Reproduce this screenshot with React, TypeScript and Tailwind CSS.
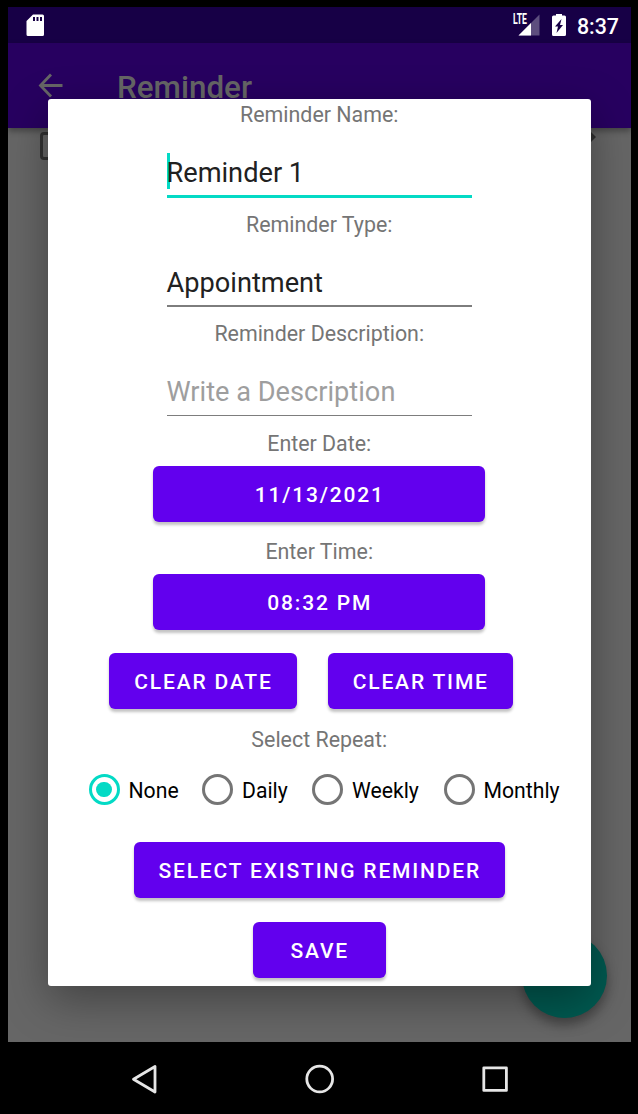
import React from "react";

function Label({ children, className = "" }: { children: React.ReactNode; className?: string }) {
  return (
    <div className={`flex h-[29px] shrink-0 items-center text-[21.4px] leading-[29px] text-[#757575] ${className}`}>
      {children}
    </div>
  );
}

function Button({ children, className = "" }: { children: React.ReactNode; className?: string }) {
  return (
    <button
      className={`flex h-[55.5px] shrink-0 items-center justify-center rounded-[6px] bg-[#6200ee] pt-[3px] pl-px text-[21px] font-medium tracking-[1.83px] whitespace-nowrap text-white shadow-[0_3px_3px_rgba(0,0,0,0.24)] ${className}`}
    >
      {children}
    </button>
  );
}

function Field({ text, state = "filled", className = "" }: { text: string; state?: "focused" | "filled" | "hint"; className?: string }) {
  return (
    <div className={`flex w-[305.5px] shrink-0 flex-col ${className}`}>
      <div className="relative flex h-[36px] items-center pt-[3px]">
        {state === "focused" && <span className="absolute top-0 left-0 h-[36px] w-[3px] bg-[#03dac5]" />}
        <span className={`relative text-[27.2px] leading-[36px] whitespace-nowrap ${state === "hint" ? "text-[#9e9e9e]" : "text-[#212121]"}`}>
          {text}
        </span>
      </div>
      <div className={state === "focused" ? "mt-[6px] h-[3px] bg-[#03dac5]" : "mt-[6px] h-[1.5px] bg-[#7d7d7d]"} />
    </div>
  );
}

function Radio({ label, checked = false, className = "" }: { label: string; checked?: boolean; className?: string }) {
  return (
    <label className={`flex shrink-0 items-center text-[21.2px] leading-[30px] text-black ${className}`}>
      <span className={`flex size-[31px] shrink-0 items-center justify-center rounded-full border-[3px] ${checked ? "border-[#03dac5]" : "border-[#757575]"}`}>
        {checked && <span className="size-[15.5px] rounded-full bg-[#03dac5]" />}
      </span>
      <span className="pt-[2px] pl-[9px]">{label}</span>
    </label>
  );
}

function StatusBar() {
  return (
    <div className="flex h-[36px] shrink-0 items-center bg-[#170046] pr-[12px] pl-[18px] text-white">
      <svg width="19" height="23" viewBox="0 0 19 23" className="mt-px">
        <path fill="#fff" fillRule="evenodd" d="M7 .5h9.5Q18 .5 18 2v18.500q0 1.500-1.500 1.500H2Q.5 22 .5 20.500V7zM7 3v4h2V3zm3.500 0v4h2V3zM14 3v4h2V3z" />
      </svg>
      <div className="ml-auto flex items-center">
        <svg width="28" height="34" viewBox="0 -5 28 34">
          <path d="M6.500 22.500L27.500 1.500v21z" fill="#5d4e7e" />
          <path d="M6.500 22.500L19 10V22.500z" fill="#fff" />
          <path d="M0 0h15v11.500H0z" fill="#170046" />
          <text x="1" y="11" fill="#fff" fontFamily="Roboto" fontSize="14" fontWeight="700" textLength="14" lengthAdjust="spacingAndGlyphs">LTE</text>
        </svg>
        <svg width="14" height="22" viewBox="0 0 14 22" className="ml-[12px]">
          <path fill="#fff" d="M4 0h6v1.500h2.500Q14 1.500 14 3v17.500q0 1.500-1.500 1.500h-11Q0 22 0 20.500V3q0-1.500 1.500-1.500H4z" />
          <path fill="#170046" d="M9.500 5L3 12.500h3L4.500 19l6.500-8H8z" />
        </svg>
        <span className="mt-[3px] ml-[11px] text-[21.400px] leading-[26px] font-medium">8:37</span>
      </div>
    </div>
  );
}

function Dialog() {
  return (
    <div className="absolute top-[99px] left-[48px] flex h-[887px] w-[542.5px] flex-col items-center rounded-[3px] bg-white pt-px shadow-[0_14px_44px_rgba(0,0,0,0.35)]">
      <Label>Reminder Name:</Label>
      <Field text="Reminder 1" state="focused" className="mt-[24px]" />
      <Label className="mt-[12px]">Reminder Type:</Label>
      <Field text="Appointment" className="mt-[24px]" />
      <Label className="mt-[12.5px]">Reminder Description:</Label>
      <Field text="Write a Description" state="hint" className="mt-[24.5px]" />
      <Label className="mt-[13px]">Enter Date:</Label>
      <Button className="mt-[8px] w-[332px]">11/13/2021</Button>
      <Label className="mt-[15.5px]">Enter Time:</Label>
      <Button className="mt-[8px] w-[332px]">08:32 PM</Button>
      <div className="mt-[23.500px] flex gap-[30.500px] self-start pl-[61px]">
        <Button className="w-[188px]">CLEAR DATE</Button>
        <Button className="w-[185.500px]">CLEAR TIME</Button>
      </div>
      <Label className="mt-[16.5px]">Select Repeat:</Label>
      <div className="mt-[20px] flex h-[31px] self-start pl-[40.5px]">
        <Radio label="None" checked className="w-[113.500px]" />
        <Radio label="Daily" className="w-[110px]" />
        <Radio label="Weekly" className="w-[131.500px]" />
        <Radio label="Monthly" />
      </div>
      <Button className="mt-[37px] w-[371px]">SELECT EXISTING REMINDER</Button>
      <Button className="mt-[24.500px] w-[133.500px]">SAVE</Button>
    </div>
  );
}

export default function App() {
  return (
    <div className="relative flex h-[1114px] w-[638px] flex-col overflow-hidden bg-black pt-[7px] font-['Roboto',sans-serif]">
      <div className="relative mr-[7px] ml-[8px] flex h-[1035px] shrink-0 flex-col overflow-hidden bg-[#666666]">
        <StatusBar />
        <header className="relative z-10 flex h-[85px] shrink-0 items-center bg-[#270060] pl-[30px] text-[#666666] shadow-[0_3px_6px_rgba(0,0,0,0.35)]">
          <svg width="25" height="25" viewBox="0 0 25 25" fill="none" stroke="#666" strokeWidth="2.800">
            <path d="M13 1.500L2.500 12.500l10.500 11M2 12.500h22.500" />
          </svg>
          <h1 className="mt-[4px] ml-[54px] text-[31.400px] leading-[36px] font-medium">Reminder</h1>
        </header>
        <div className="flex items-start justify-between pr-[35px] pl-[32px]">
          <span className="mt-[3.5px] size-[28px] rounded-[4px] border-[3px] border-[#333]" />
          <svg width="18" height="18" viewBox="0 0 18 18">
            <path d="M13 4l5 5-5 5-5-5z" fill="#303030" />
          </svg>
        </div>
        <div className="absolute right-[24px] bottom-[24px] size-[85px] rounded-full bg-[#015950] shadow-[0_7px_12px_rgba(0,0,0,0.35)]" />
      </div>
      <nav className="flex h-[73px] shrink-0 items-center justify-between pr-[129px] pl-[130px]">
        <svg width="28" height="32" viewBox="0 0 28 32" fill="none" stroke="#e6e6e6" strokeWidth="2.800" strokeLinejoin="round">
          <path d="M25 3.500v25.500L3.500 16.200z" />
        </svg>
        <svg width="30" height="30" viewBox="0 0 30 30" fill="none" stroke="#e6e6e6" strokeWidth="2.800">
          <circle cx="14.700" cy="15" r="12.900" />
        </svg>
        <svg width="28" height="28" viewBox="0 0 28 28" fill="none" stroke="#e6e6e6" strokeWidth="2.800" strokeLinejoin="round">
          <path d="M2.800 2.800h22.600v22.600H2.800z" />
        </svg>
      </nav>
      <div className="pointer-events-none absolute top-[43px] right-[7px] bottom-[72px] left-[8px] z-20 overflow-hidden">
        <div className="absolute -top-[43px] -left-[8px] h-[1114px] w-[638px]">
          <Dialog />
        </div>
      </div>
    </div>
  );
}
